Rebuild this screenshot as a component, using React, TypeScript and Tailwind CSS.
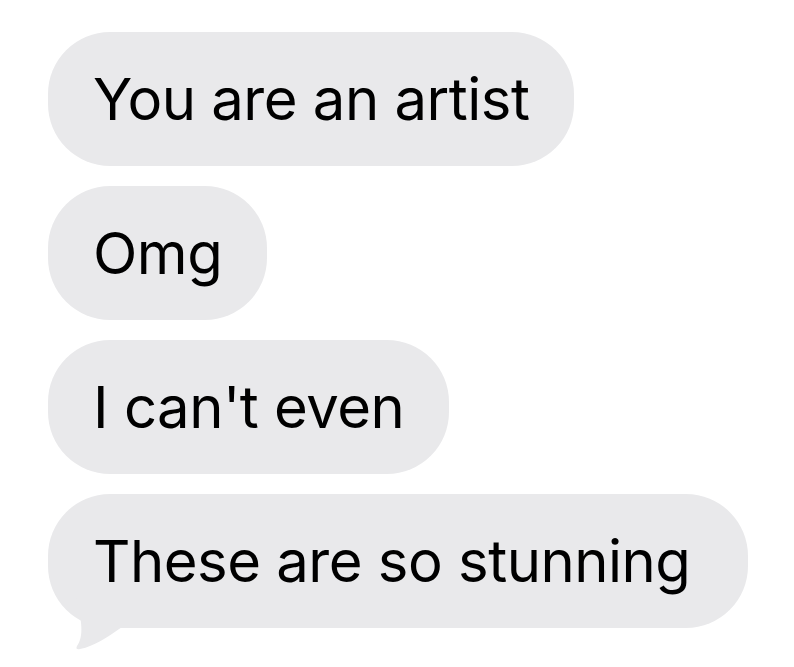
const messages = ["You are an artist", "Omg", "I can't even", "These are so stunning"];

function Bubble({ text, tail }: { text: string; tail?: boolean }) {
  return (
    <div
      className={`relative flex h-[134px] items-center rounded-[62px] bg-[#e9e9eb] pl-[45px] ${
        tail ? "pr-[58px]" : "pr-[45px]"
      }`}
    >
      {tail && (
        <svg
          className="absolute left-0 top-0 overflow-visible"
          width="80"
          height="160"
          viewBox="0 0 80 160"
        >
          <path
            d="M28 104 C34 126 36 143 29 152 Q27 156 32 155 C47 152 58 144 74 133 L74 104 Z"
            fill="#e9e9eb"
          />
        </svg>
      )}
      <span className="relative text-[58px] leading-none text-black tracking-[-0.5px]">{text}</span>
    </div>
  );
}

export default function App() {
  return (
    <div
      className="min-h-[667px] w-[794px] bg-white pl-12 pt-8"
      style={{ fontFamily: "Inter, 'Liberation Sans', sans-serif" }}
    >
      <div className="flex flex-col items-start gap-5">
        {messages.map((m, i) => (
          <Bubble key={m} text={m} tail={i === messages.length - 1} />
        ))}
      </div>
    </div>
  );
}
